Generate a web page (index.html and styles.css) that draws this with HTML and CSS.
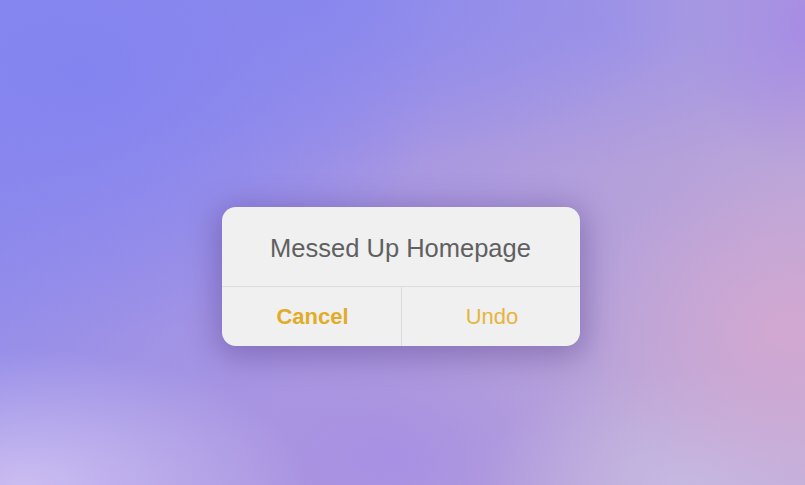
FILE: index.html
```html
<!DOCTYPE html>
<html lang="en">
<head>
    <meta charset="UTF-8">
    <meta name="viewport" content="width=device-width, initial-scale=1.0">
    <title>Messed Up Homepage</title>
    <link rel="stylesheet" href="styles.css">
</head>
<body>
    <div class="alert">
        <div class="alert-title">Messed Up Homepage</div>
        <div class="alert-actions">
            <button class="alert-btn cancel">Cancel</button>
            <button class="alert-btn">Undo</button>
        </div>
    </div>
</body>
</html>
```

FILE: styles.css
```css
html, body {
    height: 100%;
}
body {
    margin: 0;
    font-family: "Liberation Sans", Arial, sans-serif;
    background:
        radial-gradient(ellipse 45% 55% at 10% 15%, rgba(132, 132, 240, 1), rgba(132, 132, 240, 0) 100%),
        radial-gradient(ellipse 45% 35% at 40% 0%, rgba(136, 136, 238, 0.9), rgba(136, 136, 238, 0) 100%),
        radial-gradient(ellipse 35% 30% at 75% 5%, rgba(156, 146, 232, 0.8), rgba(156, 146, 232, 0) 100%),
        radial-gradient(ellipse 15% 30% at 100% 5%, rgba(168, 136, 228, 0.9), rgba(168, 136, 228, 0) 100%),
        radial-gradient(ellipse 25% 35% at 98% 68%, rgba(212, 168, 208, 0.9), rgba(212, 168, 208, 0) 100%),
        radial-gradient(ellipse 35% 28% at 3% 100%, rgba(208, 194, 242, 0.9), rgba(208, 194, 242, 0) 100%),
        radial-gradient(ellipse 25% 25% at 85% 100%, rgba(198, 186, 226, 0.9), rgba(198, 186, 226, 0) 100%),
        radial-gradient(ellipse 30% 30% at 48% 95%, rgba(166, 142, 228, 0.9), rgba(166, 142, 228, 0) 100%),
        linear-gradient(125deg, #8888ee 0%, #a494e4 40%, #b4a0da 65%, #c4acd8 100%);
    display: flex;
    justify-content: center;
    align-items: flex-start;
    padding: 207px 4px 0 0;
    box-sizing: border-box;
}
.alert {
    width: 358px;
    background: #f0f0f0;
    border-radius: 14px;
    box-shadow: 0 6px 30px 6px rgba(80, 55, 135, 0.4);
    overflow: hidden;
}
.alert-title {
    height: 76px;
    padding-top: 3px;
    display: flex;
    align-items: center;
    justify-content: center;
    font-size: 25.5px;
    color: #606060;
    border-bottom: 1px solid #dcdcdc;
}
.alert-actions {
    display: grid;
    grid-template-columns: 1fr 1fr;
    height: 59px;
}
.alert-btn {
    border: 0;
    background: transparent;
    font-family: inherit;
    font-size: 22px;
    color: #e6b53c;
    padding: 0 0 0 3px;
}
.alert-btn + .alert-btn {
    border-left: 1px solid #dcdcdc;
}
.cancel {
    font-weight: bold;
    color: #e2ab28;
}
```
